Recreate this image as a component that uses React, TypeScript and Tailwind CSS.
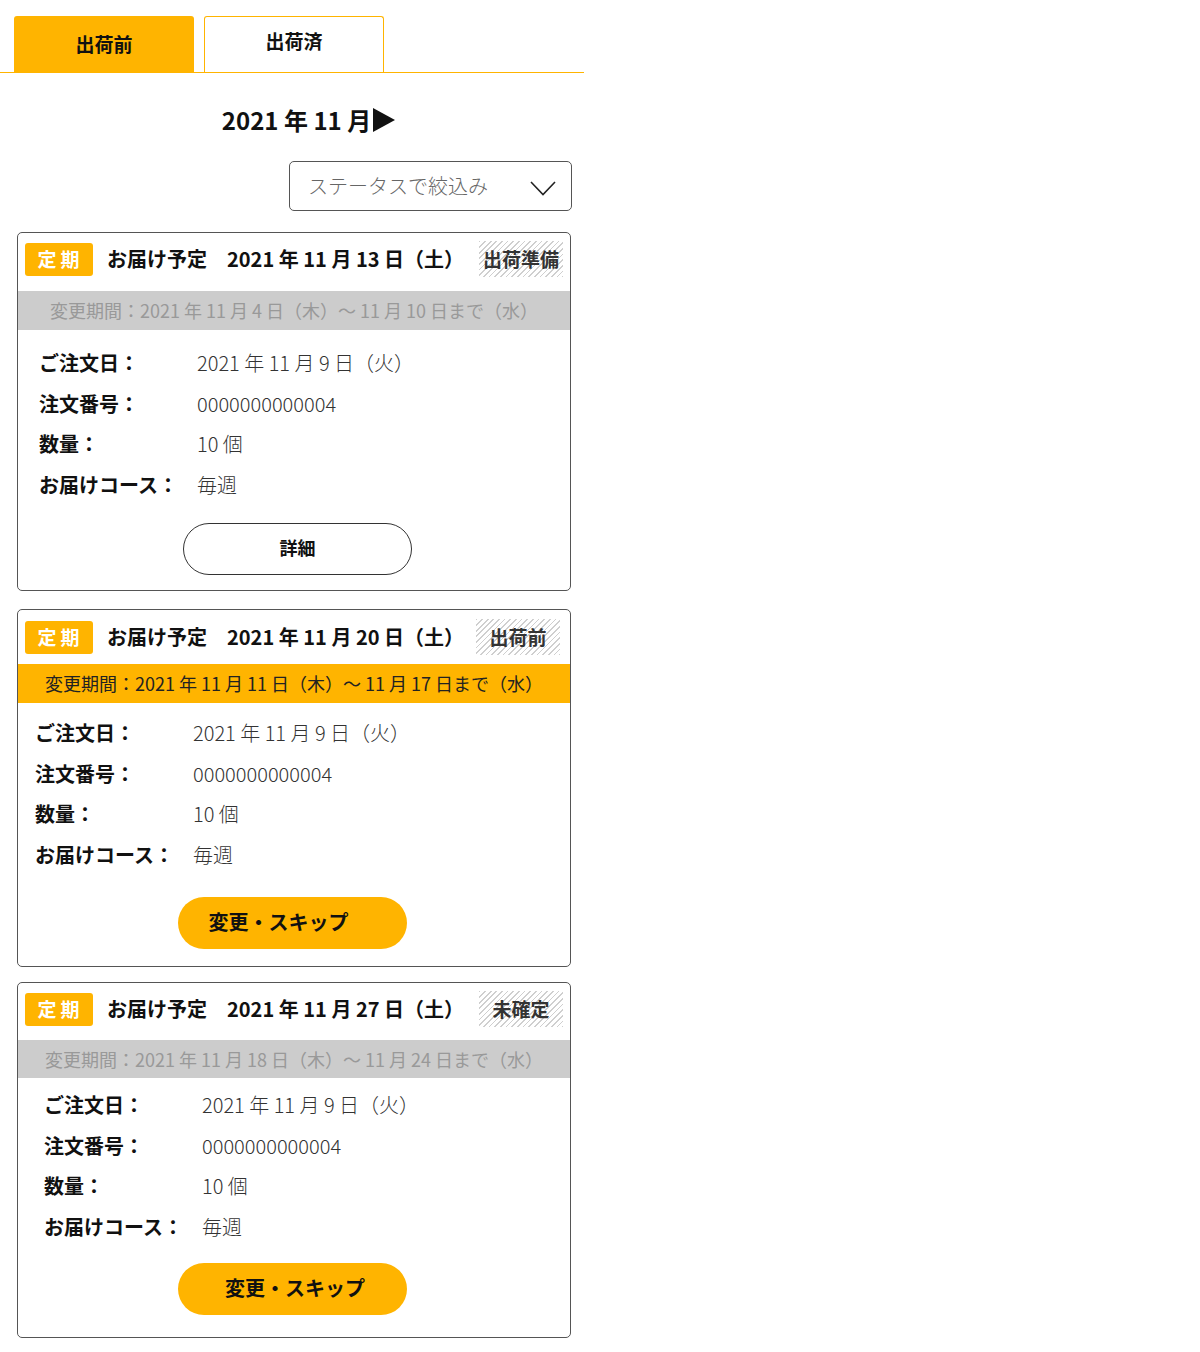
import React from "react";

type Order = {
  date: string;
  status: string;
  period: string;
  active: boolean;
  action: string;
  primary: boolean;
  // small per-card offsets taken from the layout
  pt: string;
  bandGap: string;
  bandH: string;
  rowsPt: string;
  btnGap: string;
  pb: string;
  rowsPl: string;
  btnMl: string;
  btnText: string;
  statusMr: string;
  mt: string;
};

const orders: Order[] = [
  {
    date: "2021 年 11 月 13 日（土）",
    status: "出荷準備",
    period: "変更期間：2021 年 11 月 4 日（木）～ 11 月 10 日まで（水）",
    active: false,
    action: "詳細",
    primary: false,
    pt: "pt-[8px]",
    bandGap: "mt-[14px]",
    bandH: "h-[39px]",
    rowsPt: "pt-[13px]",
    btnGap: "mt-[18px]",
    pb: "pb-[15px]",
    rowsPl: "pl-[21px]",
    btnMl: "ml-[165px]",
    btnText: "pb-[3px]",
    statusMr: "mr-[7px]",
    mt: "mt-[21px]",
  },
  {
    date: "2021 年 11 月 20 日（土）",
    status: "出荷前",
    period: "変更期間：2021 年 11 月 11 日（木）～ 11 月 17 日まで（水）",
    active: true,
    action: "変更・スキップ",
    primary: true,
    pt: "pt-[9px]",
    bandGap: "mt-[9px]",
    bandH: "h-[39px]",
    rowsPt: "pt-[10px]",
    btnGap: "mt-[22px]",
    pb: "pb-[17px]",
    rowsPl: "pl-[17px]",
    btnMl: "ml-[160px]",
    btnText: "pr-[28px] pb-[2px]",
    statusMr: "mr-[10px]",
    mt: "mt-[18px]",
  },
  {
    date: "2021 年 11 月 27 日（土）",
    status: "未確定",
    period: "変更期間：2021 年 11 月 18 日（木）～ 11 月 24 日まで（水）",
    active: false,
    action: "変更・スキップ",
    primary: true,
    pt: "pt-[8px]",
    bandGap: "mt-[13px]",
    bandH: "h-[38px]",
    rowsPt: "pt-[7px]",
    btnGap: "mt-[16px]",
    pb: "pb-[22px]",
    rowsPl: "pl-[26px]",
    btnMl: "ml-[160px]",
    btnText: "pl-[5px] pb-[2px]",
    statusMr: "mr-[7px]",
    mt: "mt-[15px]",
  },
];

const rows = [
  ["ご注文日：", "2021 年 11 月 9 日（火）"],
  ["注文番号：", "0000000000004"],
  ["数量：", "10 個"],
  ["お届けコース：", "毎週"],
];

const OrderCard: React.FC<{ order: Order }> = ({ order }) => {
  return (
    <article
      className={`${order.mt} ml-[17px] w-[554px] rounded-[5px] border border-[#555] bg-white ${order.pt} ${order.pb}`}
    >
      <div className="flex h-[36px] items-center pl-[7px]">
        <span className="flex h-[33px] w-[68px] items-center justify-center rounded-[3px] bg-[#FFB400] pl-[3px] text-[19px] font-bold tracking-[4px] text-white">
          定期
        </span>
        <span className="ml-[14px] text-[20px] font-bold text-[#111] whitespace-pre">
          お届け予定　{order.date}
        </span>
        <span
          className={`ml-auto ${order.statusMr} flex h-[36px] w-[84px] items-center justify-center bg-[repeating-linear-gradient(135deg,#cfcfcf_0px,#cfcfcf_1.2px,#fff_1.2px,#fff_4px)] text-[19px] font-bold text-[#333]`}
        >
          {order.status}
        </span>
      </div>
      <div
        className={`${order.bandGap} ${order.bandH} flex items-center justify-center text-[18px] ${
          order.active ? "bg-[#FFB400] text-[#222]" : "bg-[#cccccc] text-[#999]"
        }`}
      >
        {order.period}
      </div>
      <div className={`${order.rowsPt} ${order.rowsPl}`}>
        {rows.map(([label, value]) => (
          <div key={label} className="flex h-[40.5px] items-center">
            <span className="w-[158px] text-[20px] font-bold text-[#111]">
              {label}
            </span>
            <span className="text-[20px] font-light text-[#333]">{value}</span>
          </div>
        ))}
      </div>
      <button
        className={`${order.btnGap} ${order.btnMl} flex h-[52px] w-[229px] items-center justify-center rounded-full ${
          order.primary
            ? "bg-[#FFB400] text-[20px]"
            : "border border-[#333] bg-white text-[18px]"
        } font-bold text-[#111]`}
      >
        <span className={order.btnText}>{order.action}</span>
      </button>
    </article>
  );
};

export default function App() {
  return (
    <div className="min-h-[1352px] w-[1200px] bg-white font-['Noto_Sans_CJK_JP','Noto_Sans',sans-serif]">
      <div className="w-[584px]">
        <div className="flex border-b border-[#FFB400] pl-[14px] pt-[16px]">
          <div className="flex h-[56px] w-[180px] items-center justify-center rounded-t-[3px] bg-[#FFB400] text-[19px] font-bold text-[#111]">
            出荷前
          </div>
          <div className="ml-[10px] flex h-[56px] w-[180px] items-center justify-center rounded-t-[3px] border border-b-0 border-[#FFB400] bg-white pb-[6px] text-[19px] font-bold text-[#111]">
            出荷済
          </div>
        </div>

        <div className="mt-[31px] flex h-[32px] items-center justify-center pl-[33px] text-[24px] font-bold text-[#111]">
          <span>2021 年 11 月</span>
          <svg width="22" height="24" viewBox="0 0 22 24" className="ml-[2px]">
            <path d="M0 0 L22 12 L0 24 Z" fill="#111" />
          </svg>
        </div>

        <div className="mt-[25px] ml-[289px] flex h-[50px] w-[283px] items-center rounded-[5px] border border-[#555] pl-[18px] pr-[15px]">
          <span className="text-[20px] font-light text-[#666]">
            ステータスで絞込み
          </span>
          <svg
            width="26"
            height="15"
            viewBox="0 0 26 15"
            className="ml-auto mt-[5px]"
            fill="none"
          >
            <path d="M1 1 L13 13.5 L25 1" stroke="#222" strokeWidth="1.6" />
          </svg>
        </div>

        {orders.map((o) => (
          <OrderCard key={o.date} order={o} />
        ))}
      </div>
    </div>
  );
}
